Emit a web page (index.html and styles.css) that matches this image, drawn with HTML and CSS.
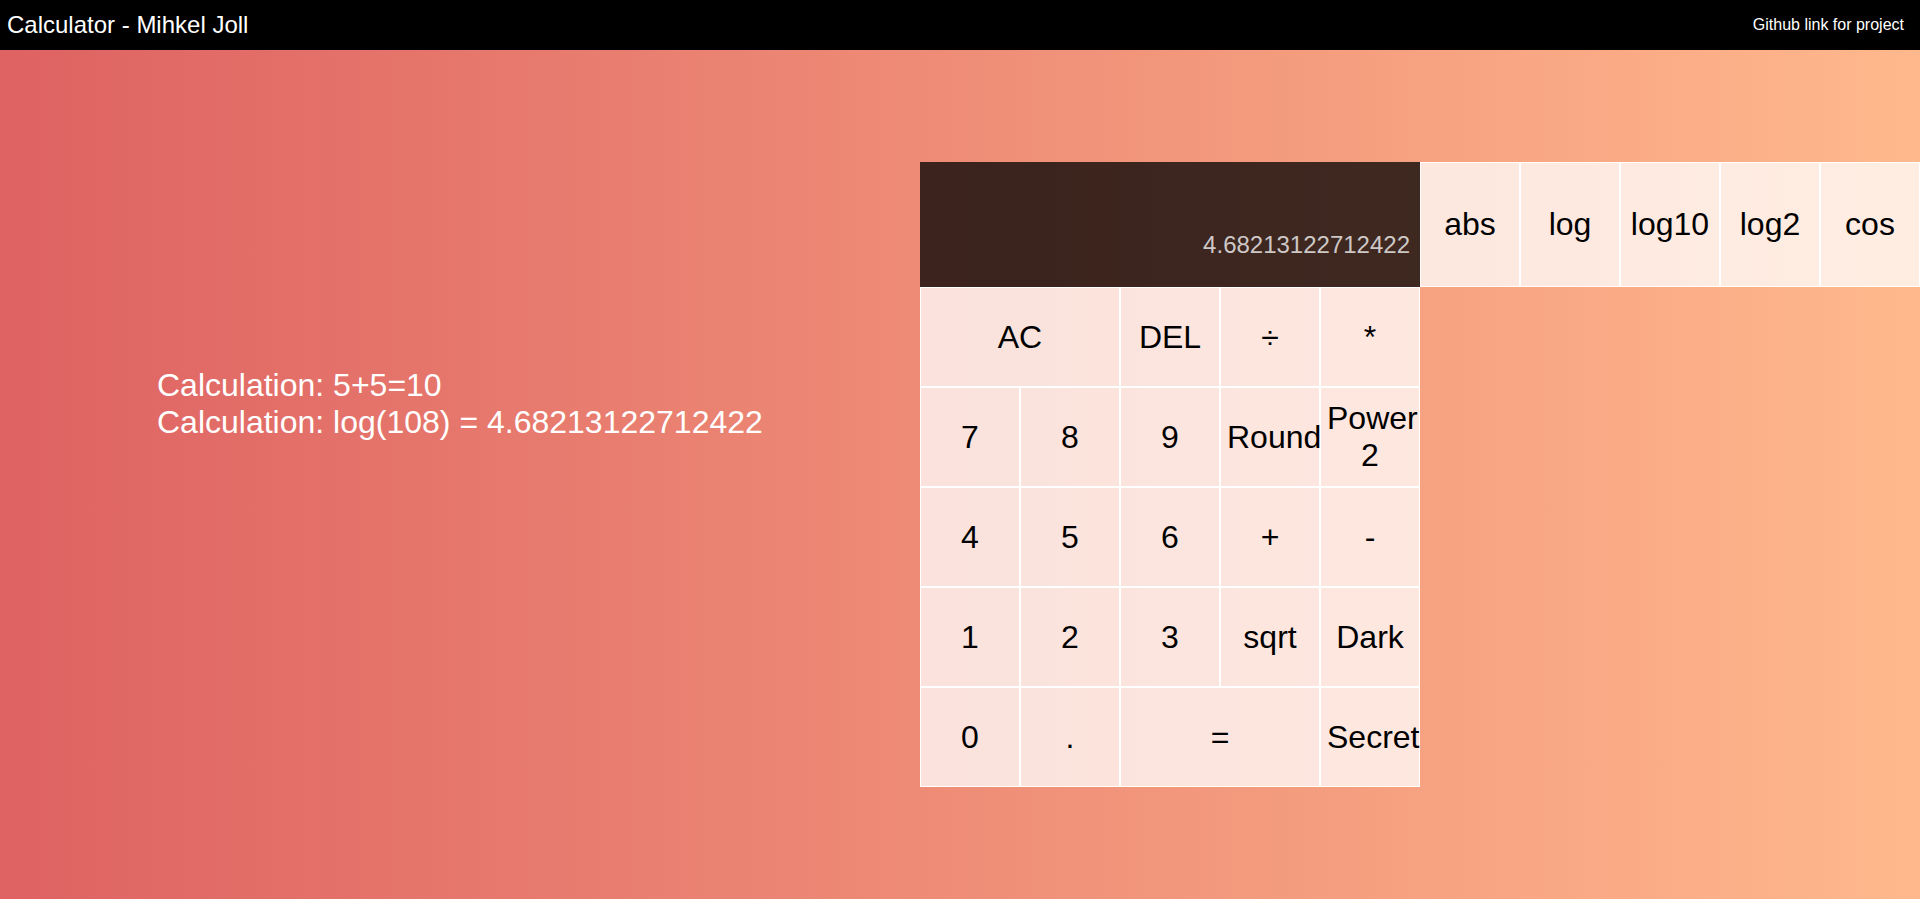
FILE: index.html
```html
<!DOCTYPE html>
<html lang="en">
<head>
<meta charset="utf-8">
<title>Calculator - Mihkel Joll</title>
<link rel="stylesheet" href="styles.css">
</head>
<body>
<header class="topbar">
  <div class="title">Calculator - Mihkel Joll</div>
  <a class="gh-link" href="#">Github link for project</a>
</header>
<main class="main">
  <section class="history">
    <div class="history-item">Calculation: 5+5=10</div>
    <div class="history-item">Calculation: log(108) = 4.68213122712422</div>
  </section>
  <section class="calculator">
    <div class="top-row">
      <div class="output">
        <div class="current">4.68213122712422</div>
      </div>
      <div class="funcs">
        <button class="key">abs</button>
        <button class="key">log</button>
        <button class="key">log10</button>
        <button class="key">log2</button>
        <button class="key">cos</button>
      </div>
    </div>
    <div class="keypad">
      <button class="key span-two">AC</button>
      <button class="key">DEL</button>
      <button class="key">÷</button>
      <button class="key">*</button>
      <button class="key">7</button>
      <button class="key">8</button>
      <button class="key">9</button>
      <button class="key">Round</button>
      <button class="key">Power 2</button>
      <button class="key">4</button>
      <button class="key">5</button>
      <button class="key">6</button>
      <button class="key">+</button>
      <button class="key">-</button>
      <button class="key">1</button>
      <button class="key">2</button>
      <button class="key">3</button>
      <button class="key">sqrt</button>
      <button class="key">Dark</button>
      <button class="key">0</button>
      <button class="key">.</button>
      <button class="key span-two">=</button>
      <button class="key">Secret</button>
    </div>
  </section>
</main>
</body>
</html>
```
FILE: styles.css
```css
* {
  box-sizing: border-box;
}

html, body {
  margin: 0;
  padding: 0;
  height: 100%;
}

body {
  font-family: "Liberation Sans", Arial, sans-serif;
  display: flex;
  flex-direction: column;
  overflow: hidden;
}

.topbar {
  height: 50px;
  flex: 0 0 50px;
  background: #000;
  color: #fff;
  display: flex;
  align-items: center;
  justify-content: space-between;
  padding: 0 16px 0 7px;
}

.title {
  font-size: 24px;
}

.gh-link {
  color: #fff;
  text-decoration: none;
  font-size: 16px;
}

.main {
  flex: 1;
  background: linear-gradient(to right, #de6262, #ffb88c);
  display: flex;
  align-items: center;
  justify-content: space-between;
  padding-left: 157px;
}

.history {
  align-self: flex-start;
  margin-top: 317px;
  color: #fff;
  font-size: 32px;
}

.calculator {
  width: 1000px;
  display: flex;
  flex-direction: column;
}

.top-row {
  display: flex;
  height: 125px;
}

.output {
  width: 500px;
  background: rgba(0, 0, 0, 0.75);
  display: flex;
  flex-direction: column;
  justify-content: flex-end;
  align-items: flex-end;
  padding: 10px 10px 28px 10px;
}

.current {
  color: rgba(255, 255, 255, 0.75);
  font-size: 24px;
}

.funcs {
  display: flex;
  width: 500px;
}

.funcs .key {
  width: 100px;
  height: 125px;
}

.keypad {
  display: grid;
  grid-template-columns: repeat(5, 100px);
  grid-auto-rows: 100px;
  width: 500px;
}

.key {
  font-family: "Liberation Sans", Arial, sans-serif;
  font-size: 32px;
  color: #000;
  background: rgba(255, 255, 255, 0.75);
  border: 1px solid #fff;
  padding: 1px 6px;
  margin: 0;
  cursor: pointer;
  outline: none;
}

.span-two {
  grid-column: span 2;
}
```
